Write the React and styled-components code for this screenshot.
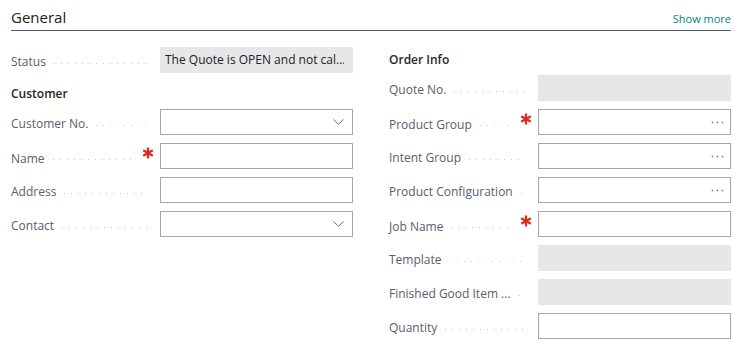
import styled, { createGlobalStyle } from "styled-components";

const GlobalStyle = createGlobalStyle`
  html, body {
    margin: 0;
    padding: 0;
    background: #fff;
  }
  body {
    font-family: "Open Sans", "Noto Sans", sans-serif;
  }
`;

const leftFields = [
  { type: "title", label: "Customer" },
  { label: "Customer No.", kind: "dropdown" },
  { label: "Name", required: true },
  { label: "Address" },
  { label: "Contact", kind: "dropdown" },
];

const rightFields = [
  { type: "title", label: "Order Info" },
  { label: "Quote No.", kind: "readonly" },
  { label: "Product Group", required: true, kind: "lookup" },
  { label: "Intent Group", kind: "lookup" },
  { label: "Product Configuration", kind: "lookup" },
  { label: "Job Name", required: true },
  { label: "Template", kind: "readonly" },
  { label: "Finished Good Item ...", kind: "readonly" },
  { label: "Quantity" },
];

const Asterisk = () => (
  <svg width="12" height="12" viewBox="0 0 12 12">
    <g stroke="#e3281c" strokeWidth="2.2" strokeLinecap="butt">
      <line x1="6" y1="0.5" x2="6" y2="11.5" />
      <line x1="1.2" y1="3.2" x2="10.8" y2="8.8" />
      <line x1="1.2" y1="8.8" x2="10.8" y2="3.2" />
    </g>
  </svg>
);

const Chevron = () => (
  <svg width="11" height="6" viewBox="0 0 11 6">
    <path d="M0.5 0.5 L5.5 5.3 L10.5 0.5" fill="none" stroke="#706e6c" strokeWidth="1" />
  </svg>
);

const Ellipsis = () => (
  <svg width="13" height="3" viewBox="0 0 13 3">
    <g fill="#8a8886">
      <circle cx="1.5" cy="1.5" r="0.9" />
      <circle cx="6.5" cy="1.5" r="0.9" />
      <circle cx="11.5" cy="1.5" r="0.9" />
    </g>
  </svg>
);

const Field = ({ label, required, kind, children }) => (
  <Row>
    <LabelCell>
      <LabelText>{label}</LabelText>
      <Leader $required={required} />
      {required && (
        <Required>
          <Asterisk />
        </Required>
      )}
    </LabelCell>
    <InputBox $readonly={kind === "readonly"} $kind={kind}>
      {children}
      {kind === "dropdown" && <Chevron />}
      {kind === "lookup" && <Ellipsis />}
    </InputBox>
  </Row>
);

const renderField = (f) =>
  f.type === "title" ? (
    <GroupTitle key={f.label}>{f.label}</GroupTitle>
  ) : (
    <Field key={f.label} {...f} />
  );

const App = () => {
  return (
    <Page>
      <GlobalStyle />
      <Header>
        <Heading>General</Heading>
        <ShowMore>Show more</ShowMore>
      </Header>
      <Body>
        <Column>
          <Field label="Status" kind="readonly">
            <StatusText>The Quote is OPEN and not cal...</StatusText>
          </Field>
          {leftFields.map(renderField)}
        </Column>
        <Column>{rightFields.map(renderField)}</Column>
      </Body>
    </Page>
  );
};

const Page = styled.div`
  padding: 0 12px 0 11px;
  width: 743px;
  box-sizing: border-box;
`;

const Header = styled.div`
  display: flex;
  justify-content: space-between;
  align-items: baseline;
  padding-top: 7px;
  padding-bottom: 3px;
  border-bottom: 1px solid #505c6d;
`;

const Heading = styled.h2`
  margin: 0;
  font-size: 15px;
  line-height: 20px;
  font-weight: 400;
  color: #212121;
`;

const ShowMore = styled.a`
  font-size: 11px;
  line-height: 14px;
  color: #00857d;
  cursor: pointer;
`;

const Body = styled.div`
  display: grid;
  grid-template-columns: 342px 342px;
  column-gap: 36px;
  padding-top: 16px;
`;

const Column = styled.div`
  display: flex;
  flex-direction: column;
  gap: 8px;
`;

const GroupTitle = styled.div`
  margin-top: 5px;
  margin-bottom: -1px;
  font-size: 12px;
  line-height: 16px;
  font-weight: 600;
  color: #262626;
`;

const Row = styled.div`
  display: grid;
  grid-template-columns: 149px 193px;
  height: 26px;
`;

const LabelCell = styled.div`
  display: flex;
  align-items: center;
  padding-top: 4px;
  padding-right: 6px;
  min-width: 0;
`;

const LabelText = styled.span`
  font-size: 12px;
  line-height: 16px;
  color: #56606e;
  white-space: nowrap;
`;

const Leader = styled.span`
  flex: 1;
  height: 1px;
  margin: 2px ${(p) => (p.$required ? "8px" : "7px")} 0 8px;
  background-image: linear-gradient(to right, #c4c4c4 1px, transparent 1px);
  background-size: 7px 1px;
  background-repeat: repeat-x;
`;

const Required = styled.span`
  display: flex;
  margin-bottom: 11px;
`;

const InputBox = styled.div`
  box-sizing: border-box;
  height: 26px;
  display: flex;
  align-items: center;
  justify-content: ${(p) => (p.$kind ? "flex-end" : "flex-start")};
  padding: 0 ${(p) => (p.$kind === "lookup" ? "6px" : "8px")} 0 4px;
  background: ${(p) => (p.$readonly ? "#e6e7e9" : "#fff")};
  border: 1px solid ${(p) => (p.$readonly ? "#e6e7e9" : "#a6a6a6")};
  overflow: hidden;
`;

const StatusText = styled.span`
  flex: 1;
  font-size: 12px;
  line-height: 16px;
  color: #212121;
  white-space: nowrap;
  overflow: hidden;
`;

export default App;
